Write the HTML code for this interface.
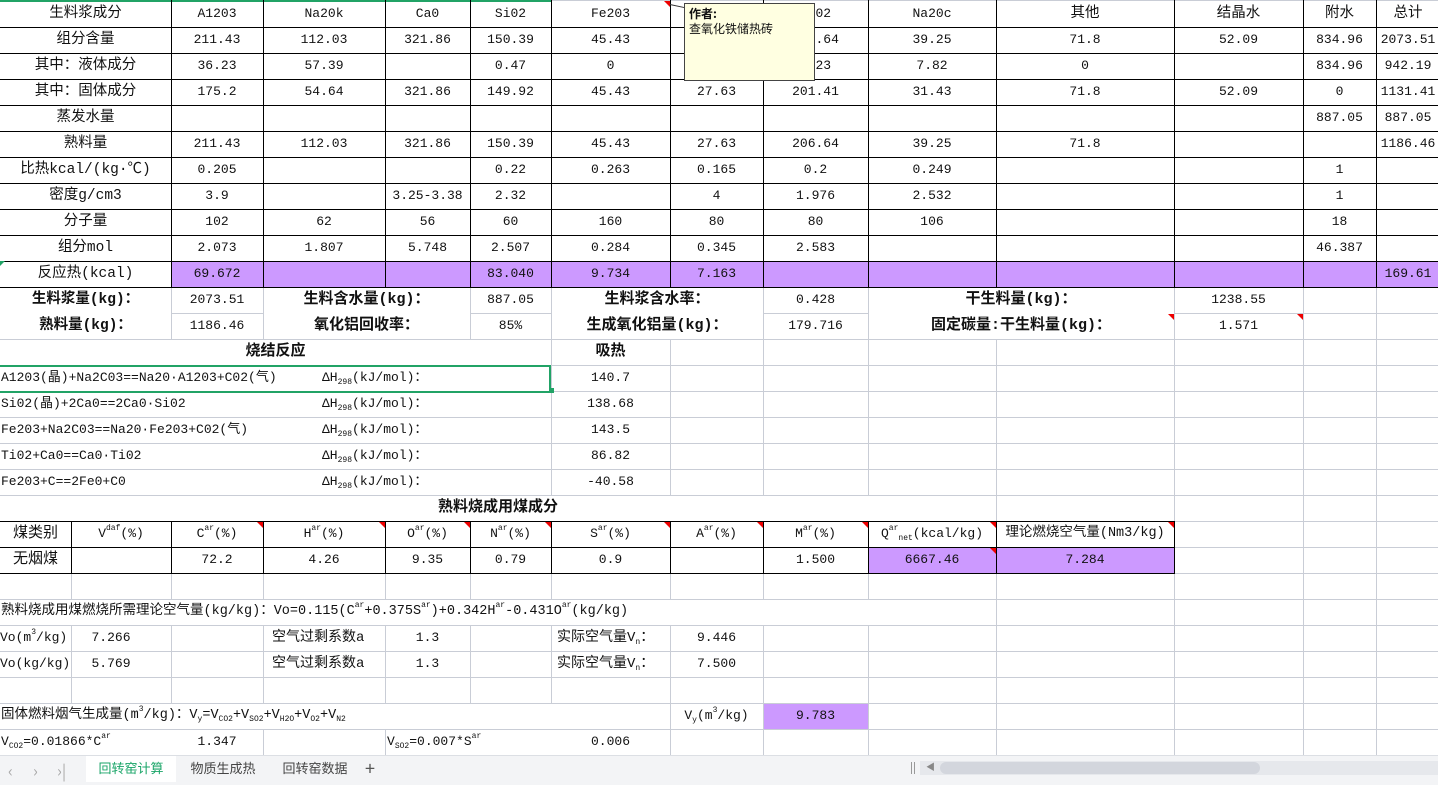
<!DOCTYPE html>
<html><head><meta charset="utf-8"><style>
body{margin:0;width:1438px;height:784px;overflow:hidden;background:#fff;position:relative;font-family:"Liberation Mono","Noto Sans CJK SC",monospace;font-size:13px;color:#111}
.c{position:absolute;height:26px;line-height:26px;text-align:center;white-space:nowrap;overflow:visible;font-style:normal;display:block}
.b{font-weight:bold;font-size:15px}
.l{text-align:left}
.h{position:absolute;height:1px;background:#000}
.v{position:absolute;width:1px;background:#000}
.gv{position:absolute;width:1px;background:#c9cdd6;top:287px;height:468px}
.k0{left:0;width:171px;font-size:14.5px}.k1{left:171px;width:92px}.k2{left:263px;width:122px}.k3{left:385px;width:85px}.k4{left:470px;width:81px}.k5{left:551px;width:119px}.k6{left:670px;width:93px}.k7{left:763px;width:105px}.k8{left:868px;width:128px}.k9{left:996px;width:178px}.k10{left:1174px;width:129px}.k11{left:1303px;width:73px}.k12{left:1376px;width:64px}.L0{left:0;width:71px}.L1{left:71px;width:100px}
.r0{top:1px}.r1{top:27px}.r2{top:53px}.r3{top:79px}.r4{top:105px}.r5{top:131px}.r6{top:157px}.r7{top:183px}.r8{top:209px}.r9{top:235px}.r10{top:261px}.r11{top:287px}.r12{top:313px}.r13{top:339px}.r14{top:365px}.r15{top:391px}.r16{top:417px}.r17{top:443px}.r18{top:469px}.r19{top:495px}.r20{top:521px}.r21{top:547px}.r22{top:573px}.r23{top:599px}.r24{top:625px}.r25{top:651px}.r26{top:677px}.r27{top:703px}.r28{top:729px}
sup{font-size:8px;vertical-align:7px;line-height:0}
sub{font-size:8px;vertical-align:-3px;line-height:0}
.tri{position:absolute;width:0;height:0;border-top:6px solid #e00;border-left:6px solid transparent}
.p{position:absolute;background:#cc99ff}
</style></head><body>
<div style="position:absolute;left:0;top:287px;width:1438px;height:469px;background:repeating-linear-gradient(to bottom,#c9cdd6 0 1px,transparent 1px 26px)"></div>
<div class="gv" style="left:71px"></div><div class="gv" style="left:171px"></div><div class="gv" style="left:263px"></div><div class="gv" style="left:385px"></div><div class="gv" style="left:470px"></div><div class="gv" style="left:551px"></div><div class="gv" style="left:670px"></div><div class="gv" style="left:763px"></div><div class="gv" style="left:868px"></div><div class="gv" style="left:996px"></div><div class="gv" style="left:1174px"></div><div class="gv" style="left:1303px"></div><div class="gv" style="left:1376px"></div>
<div class="p" style="background:#fff;left:0;top:288px;width:171px;height:51px"></div>
<div class="p" style="background:#fff;left:264px;top:288px;width:206px;height:51px"></div>
<div class="p" style="background:#fff;left:552px;top:288px;width:211px;height:51px"></div>
<div class="p" style="background:#fff;left:869px;top:288px;width:305px;height:51px"></div>
<div class="p" style="background:#fff;left:0;top:340px;width:551px;height:25px"></div>
<div class="p" style="background:#fff;left:0;top:366px;width:551px;height:25px"></div>
<div class="p" style="background:#fff;left:0;top:392px;width:551px;height:25px"></div>
<div class="p" style="background:#fff;left:0;top:418px;width:551px;height:25px"></div>
<div class="p" style="background:#fff;left:0;top:444px;width:551px;height:25px"></div>
<div class="p" style="background:#fff;left:0;top:470px;width:551px;height:25px"></div>
<div class="p" style="background:#fff;left:0;top:496px;width:996px;height:25px"></div>
<div class="p" style="background:#fff;left:0;top:600px;width:996px;height:25px"></div>
<div class="p" style="background:#fff;left:0;top:704px;width:670px;height:25px"></div>
<div class="p" style="background:#fff;left:0;top:730px;width:263px;height:25px"></div>
<div class="p" style="background:#fff;left:386px;top:730px;width:284px;height:25px"></div>
<div class="p" style="left:172px;top:262px;width:1266px;height:25px"></div>
<div class="p" style="left:869px;top:548px;width:305px;height:25px"></div>
<div class="p" style="left:764px;top:704px;width:104px;height:25px"></div>
<div class="h" style="left:0;top:0;width:1438px;background:#c9cdd6"></div>
<div class="h" style="left:0;top:0;width:551px;height:2px;background:#21a366"></div>
<div class="h" style="left:0;top:27px;width:1438px"></div><div class="h" style="left:0;top:53px;width:1438px"></div><div class="h" style="left:0;top:79px;width:1438px"></div><div class="h" style="left:0;top:105px;width:1438px"></div><div class="h" style="left:0;top:131px;width:1438px"></div><div class="h" style="left:0;top:157px;width:1438px"></div><div class="h" style="left:0;top:183px;width:1438px"></div><div class="h" style="left:0;top:209px;width:1438px"></div><div class="h" style="left:0;top:235px;width:1438px"></div><div class="h" style="left:0;top:261px;width:1438px"></div><div class="h" style="left:0;top:287px;width:1438px"></div>
<div class="v" style="left:171px;top:0;height:287px"></div><div class="v" style="left:263px;top:0;height:287px"></div><div class="v" style="left:385px;top:0;height:287px"></div><div class="v" style="left:470px;top:0;height:287px"></div><div class="v" style="left:551px;top:0;height:287px"></div><div class="v" style="left:670px;top:0;height:287px"></div><div class="v" style="left:763px;top:0;height:287px"></div><div class="v" style="left:868px;top:0;height:287px"></div><div class="v" style="left:996px;top:0;height:287px"></div><div class="v" style="left:1174px;top:0;height:287px"></div><div class="v" style="left:1303px;top:0;height:287px"></div><div class="v" style="left:1376px;top:0;height:287px"></div>
<div class="h" style="left:0;top:521px;width:1175px"></div><div class="h" style="left:0;top:547px;width:1175px"></div><div class="h" style="left:0;top:573px;width:1175px"></div>
<div class="v" style="left:71px;top:521px;height:52px"></div><div class="v" style="left:171px;top:521px;height:52px"></div><div class="v" style="left:263px;top:521px;height:52px"></div><div class="v" style="left:385px;top:521px;height:52px"></div><div class="v" style="left:470px;top:521px;height:52px"></div><div class="v" style="left:551px;top:521px;height:52px"></div><div class="v" style="left:670px;top:521px;height:52px"></div><div class="v" style="left:763px;top:521px;height:52px"></div><div class="v" style="left:868px;top:521px;height:52px"></div><div class="v" style="left:996px;top:521px;height:52px"></div><div class="v" style="left:1174px;top:521px;height:52px"></div>
<div style="position:absolute;left:0;top:365px;width:549px;height:24px;border:2px solid #21a366;border-left:none"></div>
<div style="position:absolute;left:549px;top:388px;width:5px;height:5px;background:#21a366"></div>

<i class="c k0 r0">生料浆成分</i><i class="c k1 r0">A1203</i><i class="c k2 r0">Na20k</i><i class="c k3 r0">Ca0</i><i class="c k4 r0">Si02</i><i class="c k5 r0">Fe203</i><i class="c k6 r0">Ti02</i><i class="c k7 r0">Ti02</i><i class="c k8 r0">Na20c</i><i class="c k9 r0" style="font-size:14.5px">其他</i><i class="c k10 r0" style="font-size:14.5px">结晶水</i><i class="c k11 r0" style="font-size:14.5px">附水</i><i class="c k12 r0" style="font-size:14.5px">总计</i>
<i class="c k0 r1">组分含量</i><i class="c k1 r1">211.43</i><i class="c k2 r1">112.03</i><i class="c k3 r1">321.86</i><i class="c k4 r1">150.39</i><i class="c k5 r1">45.43</i><i class="c k6 r1">27.63</i><i class="c k7 r1">206.64</i><i class="c k8 r1">39.25</i><i class="c k9 r1">71.8</i><i class="c k10 r1">52.09</i><i class="c k11 r1">834.96</i><i class="c k12 r1">2073.51</i>
<i class="c k0 r2">其中：液体成分</i><i class="c k1 r2">36.23</i><i class="c k2 r2">57.39</i><i class="c k4 r2">0.47</i><i class="c k5 r2">0</i><i class="c k7 r2">5.23</i><i class="c k8 r2">7.82</i><i class="c k9 r2">0</i><i class="c k11 r2">834.96</i><i class="c k12 r2">942.19</i>
<i class="c k0 r3">其中：固体成分</i><i class="c k1 r3">175.2</i><i class="c k2 r3">54.64</i><i class="c k3 r3">321.86</i><i class="c k4 r3">149.92</i><i class="c k5 r3">45.43</i><i class="c k6 r3">27.63</i><i class="c k7 r3">201.41</i><i class="c k8 r3">31.43</i><i class="c k9 r3">71.8</i><i class="c k10 r3">52.09</i><i class="c k11 r3">0</i><i class="c k12 r3">1131.41</i>
<i class="c k0 r4">蒸发水量</i><i class="c k11 r4">887.05</i><i class="c k12 r4">887.05</i>
<i class="c k0 r5">熟料量</i><i class="c k1 r5">211.43</i><i class="c k2 r5">112.03</i><i class="c k3 r5">321.86</i><i class="c k4 r5">150.39</i><i class="c k5 r5">45.43</i><i class="c k6 r5">27.63</i><i class="c k7 r5">206.64</i><i class="c k8 r5">39.25</i><i class="c k9 r5">71.8</i><i class="c k12 r5">1186.46</i>
<i class="c k0 r6">比热kcal/(kg·℃)</i><i class="c k1 r6">0.205</i><i class="c k4 r6">0.22</i><i class="c k5 r6">0.263</i><i class="c k6 r6">0.165</i><i class="c k7 r6">0.2</i><i class="c k8 r6">0.249</i><i class="c k11 r6">1</i>
<i class="c k0 r7">密度g/cm3</i><i class="c k1 r7">3.9</i><i class="c k3 r7">3.25-3.38</i><i class="c k4 r7">2.32</i><i class="c k6 r7">4</i><i class="c k7 r7">1.976</i><i class="c k8 r7">2.532</i><i class="c k11 r7">1</i>
<i class="c k0 r8">分子量</i><i class="c k1 r8">102</i><i class="c k2 r8">62</i><i class="c k3 r8">56</i><i class="c k4 r8">60</i><i class="c k5 r8">160</i><i class="c k6 r8">80</i><i class="c k7 r8">80</i><i class="c k8 r8">106</i><i class="c k11 r8">18</i>
<i class="c k0 r9">组分mol</i><i class="c k1 r9">2.073</i><i class="c k2 r9">1.807</i><i class="c k3 r9">5.748</i><i class="c k4 r9">2.507</i><i class="c k5 r9">0.284</i><i class="c k6 r9">0.345</i><i class="c k7 r9">2.583</i><i class="c k11 r9">46.387</i>
<i class="c k0 r10">反应热(kcal)</i><i class="c k1 r10">69.672</i><i class="c k4 r10">83.040</i><i class="c k5 r10">9.734</i><i class="c k6 r10">7.163</i><i class="c k12 r10">169.61</i>
<div style="position:absolute;left:0;top:261px;border-top:5px solid #21a366;border-right:5px solid transparent"></div>

<i class="c b k0 r11">生料浆量(kg)：</i><i class="c k1 r11">2073.51</i><i class="c b r11" style="left:263px;width:207px">生料含水量(kg)：</i><i class="c k4 r11">887.05</i><i class="c b r11" style="left:551px;width:212px">生料浆含水率：</i><i class="c k7 r11">0.428</i><i class="c b r11" style="left:868px;width:306px">干生料量(kg)：</i><i class="c k10 r11">1238.55</i>
<i class="c b k0 r12">熟料量(kg)：</i><i class="c k1 r12">1186.46</i><i class="c b r12" style="left:263px;width:207px">氧化铝回收率：</i><i class="c k4 r12">85%</i><i class="c b r12" style="left:551px;width:212px">生成氧化铝量(kg)：</i><i class="c k7 r12">179.716</i><i class="c b r12" style="left:868px;width:306px">固定碳量:干生料量(kg)：</i><i class="c k10 r12">1.571</i>
<div class="tri" style="left:1168px;top:314px"></div><div class="tri" style="left:1297px;top:314px"></div>

<i class="c b r13" style="left:0;width:551px">烧结反应</i><i class="c b k5 r13">吸热</i>
<i class="c l r14" style="left:1px">A1203(晶)+Na2C03==Na20·A1203+C02(气)</i><i class="c l r14" style="left:322px">ΔH<sub>298</sub>(kJ/mol)：</i><i class="c k5 r14">140.7</i>
<i class="c l r15" style="left:1px">Si02(晶)+2Ca0==2Ca0·Si02</i><i class="c l r15" style="left:322px">ΔH<sub>298</sub>(kJ/mol)：</i><i class="c k5 r15">138.68</i>
<i class="c l r16" style="left:1px">Fe203+Na2C03==Na20·Fe203+C02(气)</i><i class="c l r16" style="left:322px">ΔH<sub>298</sub>(kJ/mol)：</i><i class="c k5 r16">143.5</i>
<i class="c l r17" style="left:1px">Ti02+Ca0==Ca0·Ti02</i><i class="c l r17" style="left:322px">ΔH<sub>298</sub>(kJ/mol)：</i><i class="c k5 r17">86.82</i>
<i class="c l r18" style="left:1px">Fe203+C==2Fe0+C0</i><i class="c l r18" style="left:322px">ΔH<sub>298</sub>(kJ/mol)：</i><i class="c k5 r18">-40.58</i>
<i class="c b r19" style="left:0;width:996px">熟料烧成用煤成分</i>

<i class="c L0 r20" style="font-size:15px">煤类别</i><i class="c L1 r20">V<sup>daf</sup>(%)</i><i class="c k1 r20">C<sup>ar</sup>(%)</i><i class="c k2 r20">H<sup>ar</sup>(%)</i><i class="c k3 r20">O<sup>ar</sup>(%)</i><i class="c k4 r20">N<sup>ar</sup>(%)</i><i class="c k5 r20">S<sup>ar</sup>(%)</i><i class="c k6 r20">A<sup>ar</sup>(%)</i><i class="c k7 r20">M<sup>ar</sup>(%)</i><i class="c k8 r20">Q<sup>ar</sup><sub>net</sub>(kcal/kg)</i><i class="c k9 r20" style="font-size:13.5px">理论燃烧空气量(Nm3/kg)</i>
<i class="c L0 r21" style="font-size:15px">无烟煤</i><i class="c k1 r21">72.2</i><i class="c k2 r21">4.26</i><i class="c k3 r21">9.35</i><i class="c k4 r21">0.79</i><i class="c k5 r21">0.9</i><i class="c k7 r21">1.500</i><i class="c k8 r21">6667.46</i><i class="c k9 r21">7.284</i>
<div class="tri" style="left:257px;top:522px"></div><div class="tri" style="left:379px;top:522px"></div><div class="tri" style="left:464px;top:522px"></div><div class="tri" style="left:545px;top:522px"></div><div class="tri" style="left:664px;top:522px"></div><div class="tri" style="left:757px;top:522px"></div><div class="tri" style="left:862px;top:522px"></div><div class="tri" style="left:990px;top:522px"></div><div class="tri" style="left:1168px;top:522px"></div><div class="tri" style="left:990px;top:548px"></div>

<i class="c l r23" style="left:1px;font-size:13.5px">熟料烧成用煤燃烧所需理论空气量(kg/kg)：Vo=0.115(C<sup>ar</sup>+0.375S<sup>ar</sup>)+0.342H<sup>ar</sup>-0.431O<sup>ar</sup>(kg/kg)</i>
<i class="c l r24" style="left:0">Vo(m<sup>3</sup>/kg)</i><i class="c r24" style="left:71px;width:80px">7.266</i><i class="c l r24" style="left:272px;font-size:14px">空气过剩系数a</i><i class="c k3 r24">1.3</i><i class="c l r24" style="left:557px;font-size:14px">实际空气量V<sub>n</sub>：</i><i class="c k6 r24">9.446</i>
<i class="c l r25" style="left:0">Vo(kg/kg)</i><i class="c r25" style="left:71px;width:80px">5.769</i><i class="c l r25" style="left:272px;font-size:14px">空气过剩系数a</i><i class="c k3 r25">1.3</i><i class="c l r25" style="left:557px;font-size:14px">实际空气量V<sub>n</sub>：</i><i class="c k6 r25">7.500</i>
<i class="c l r27" style="left:1px;font-size:13.5px">固体燃料烟气生成量(m<sup>3</sup>/kg)：V<sub>y</sub>=V<sub>CO2</sub>+V<sub>SO2</sub>+V<sub>H2O</sub>+V<sub>O2</sub>+V<sub>N2</sub></i><i class="c k6 r27">V<sub>y</sub>(m<sup>3</sup>/kg)</i><i class="c k7 r27">9.783</i>
<i class="c l r28" style="left:1px">V<sub>CO2</sub>=0.01866*C<sup>ar</sup></i><i class="c k1 r28">1.347</i><i class="c l r28" style="left:387px">V<sub>SO2</sub>=0.007*S<sup>ar</sup></i><i class="c k5 r28">0.006</i>

<div class="tri" style="left:664px;top:1px"></div>
<div style="position:absolute;left:670px;top:4px;width:16px;height:1px;background:#333;transform:rotate(12deg);transform-origin:0 0"></div>
<div style="position:absolute;left:684px;top:3px;width:131px;height:78px;background:#ffffe1;border:1px solid #444;font-size:12px;line-height:15px;padding:2px 4px;box-sizing:border-box;font-family:'Noto Sans CJK SC',sans-serif"><b>作者:</b><br>查氧化铁储热砖</div>

<div style="position:absolute;left:0;top:755px;width:1438px;height:29px;background:#f3f4f6;border-top:1px solid #dcdfe4;font-family:'Noto Sans CJK SC',sans-serif;font-size:13px;color:#444">
<span style="position:absolute;left:8px;top:2px;color:#aaa;font-size:16px">&#8249;</span>
<span style="position:absolute;left:33px;top:2px;color:#aaa;font-size:16px">&#8250;</span>
<span style="position:absolute;left:57px;top:2px;color:#aaa;font-size:16px">&#8250;|</span>
<div style="position:absolute;left:86px;top:0;width:90px;height:26px;background:#fff;color:#1aa568;text-align:center;line-height:24px">回转窑计算</div>
<div style="position:absolute;left:178px;top:0;width:90px;line-height:24px;text-align:center">物质生成热</div>
<div style="position:absolute;left:270px;top:0;width:90px;line-height:24px;text-align:center">回转窑数据</div>
<span style="position:absolute;left:365px;top:1px;font-size:18px;color:#555;line-height:22px">+</span>
<div style="position:absolute;left:911px;top:6px;width:1px;height:12px;background:#999"></div><div style="position:absolute;left:914px;top:6px;width:1px;height:12px;background:#999"></div>
<div style="position:absolute;left:920px;top:5px;width:518px;height:14px;background:#e6e8ec"></div>
<span style="position:absolute;left:926px;top:4px;color:#888;font-size:9px">&#9664;</span>
<div style="position:absolute;left:940px;top:6px;width:320px;height:12px;background:#d3d6dd;border-radius:6px"></div>
</div>
</body></html>
